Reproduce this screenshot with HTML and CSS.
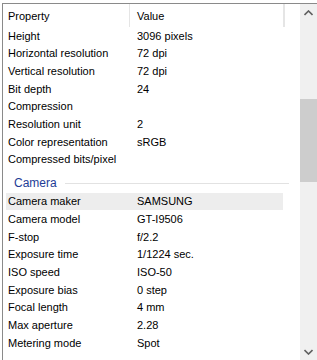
FILE: index.html
```html
<!DOCTYPE html>
<html lang="en">

<head>
    <meta charset="UTF-8">
    <meta name="viewport" content="width=device-width, initial-scale=1.0">
    <title>Details</title>
    <link rel="stylesheet" href="styles.css">
</head>

<body>
    <div class="panel">
        <div class="list">
            <div class="header">
                <div class="col-name">Property</div>
                <div class="col-value">Value</div>
                <div class="col-rest"></div>
            </div>

            <div class="row"><span class="name">Height</span><span class="value">3096 pixels</span></div>
            <div class="row"><span class="name">Horizontal resolution</span><span class="value">72 dpi</span></div>
            <div class="row"><span class="name">Vertical resolution</span><span class="value">72 dpi</span></div>
            <div class="row"><span class="name">Bit depth</span><span class="value">24</span></div>
            <div class="row"><span class="name">Compression</span><span class="value"></span></div>
            <div class="row"><span class="name">Resolution unit</span><span class="value">2</span></div>
            <div class="row"><span class="name">Color representation</span><span class="value">sRGB</span></div>
            <div class="row"><span class="name">Compressed bits/pixel</span><span class="value"></span></div>

            <div class="group">
                <span class="group-title">Camera</span>
                <span class="group-line"></span>
            </div>

            <div class="row selected"><span class="name">Camera maker</span><span class="value">SAMSUNG</span></div>
            <div class="row"><span class="name">Camera model</span><span class="value">GT-I9506</span></div>
            <div class="row"><span class="name">F-stop</span><span class="value">f/2.2</span></div>
            <div class="row"><span class="name">Exposure time</span><span class="value">1/1224 sec.</span></div>
            <div class="row"><span class="name">ISO speed</span><span class="value">ISO-50</span></div>
            <div class="row"><span class="name">Exposure bias</span><span class="value">0 step</span></div>
            <div class="row"><span class="name">Focal length</span><span class="value">4 mm</span></div>
            <div class="row"><span class="name">Max aperture</span><span class="value">2.28</span></div>
            <div class="row"><span class="name">Metering mode</span><span class="value">Spot</span></div>
        </div>

        <div class="scrollbar">
            <div class="arrow">
                <svg width="9" height="6" viewBox="0 0 9 6"><path d="M0.5 5 L4.5 1 L8.5 5" fill="none" stroke="#606060" stroke-width="1.6"/></svg>
            </div>
            <div class="track">
                <div class="thumb"></div>
            </div>
            <div class="arrow">
                <svg width="9" height="6" viewBox="0 0 9 6"><path d="M0.5 1 L4.5 5 L8.5 1" fill="none" stroke="#606060" stroke-width="1.6"/></svg>
            </div>
        </div>
    </div>
</body>

</html>
```

FILE: styles.css
```css
html,
body {
    margin: 0;
    height: 100%;
    overflow: hidden;
    background: #fff;
}

body {
    font-family: "Liberation Sans", Arial, sans-serif;
    font-size: 11px;
    color: #000;
}

.panel {
    display: flex;
    margin: 3px 0 0 2px;
    height: 380px;
    border-top: 1px solid #8a8a8a;
    border-left: 1px solid #8a8a8a;
}

.list {
    flex: 1;
    overflow: hidden;
}

.header {
    display: flex;
    height: 23px;
    align-items: center;
}

.header > div {
    height: 100%;
    display: flex;
    align-items: center;
    border-right: 1px solid #e5e5e5;
    box-sizing: border-box;
}

.col-name {
    width: 127px;
    padding-left: 5px;
}

.col-value {
    width: 154px;
    padding-left: 7px;
}

.row {
    display: flex;
    height: 17.65px;
    align-items: center;
    margin-right: 17px;
}

.row.selected {
    background: #ededed;
    margin-left: 3px;
}

.row.selected .name {
    padding-left: 2px;
}

.name {
    width: 124px;
    padding-left: 5px;
    flex-shrink: 0;
}

.row .value {
    padding-left: 5px;
}

.group {
    display: flex;
    align-items: center;
    box-sizing: border-box;
    height: 24.5px;
    padding: 6px 0 0 11px;
    margin-right: 11px;
}

.group-title {
    color: #1e3c96;
    font-size: 12px;
}

.group-line {
    flex: 1;
    height: 1px;
    background: #e2e2e2;
    margin-left: 8px;
}

.scrollbar {
    width: 17px;
    flex-shrink: 0;
    display: flex;
    flex-direction: column;
    background: #f0f0f0;
    height: 356px;
}

.arrow {
    height: 17px;
    display: flex;
    align-items: center;
    justify-content: center;
}

.track {
    flex: 1;
    padding-top: 78px;
}

.thumb {
    height: 83px;
    background: #cdcdcd;
}
```
